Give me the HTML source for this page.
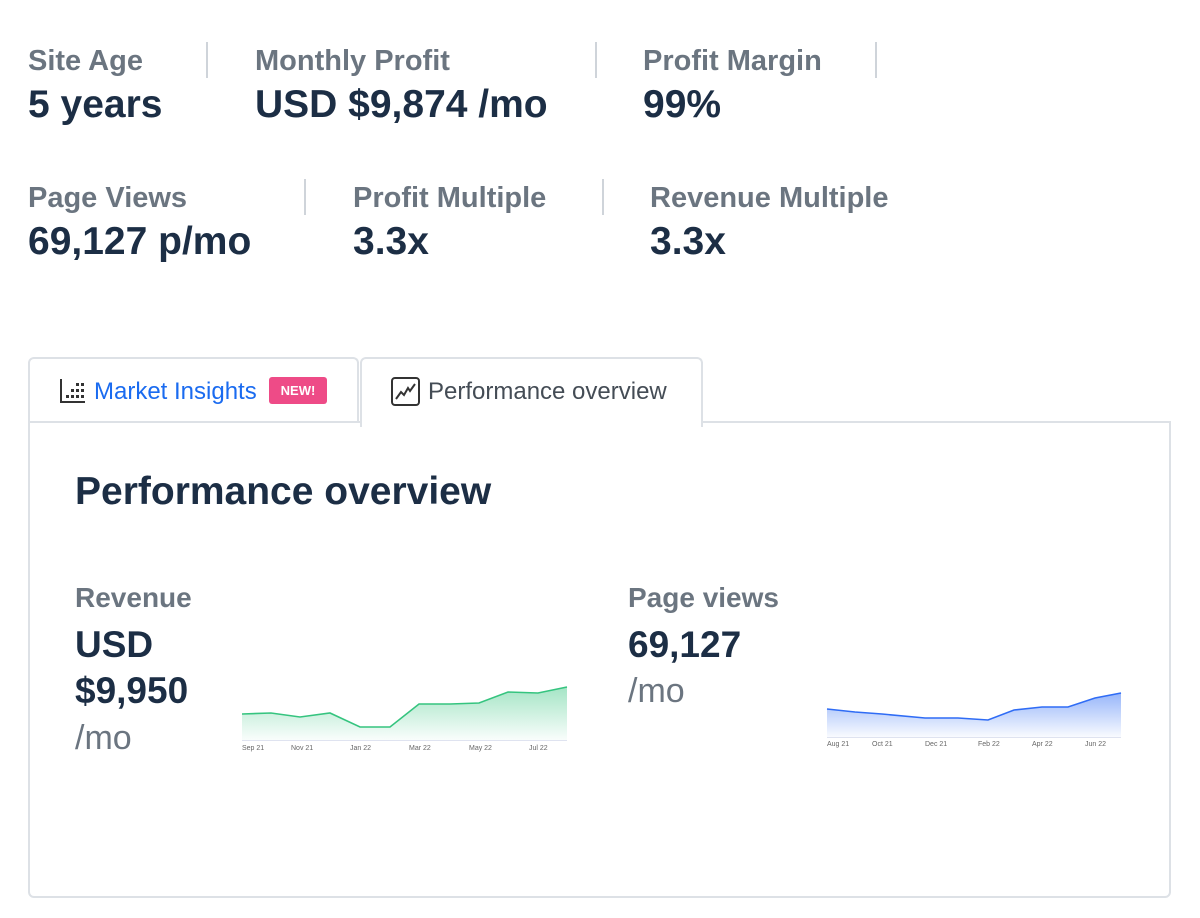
<!DOCTYPE html>
<html><head><meta charset="utf-8"><style>
body{margin:0;width:1200px;height:918px;background:#fff;font-family:"Liberation Sans",Arial,sans-serif;position:relative;overflow:hidden}
.a{position:absolute;white-space:nowrap;line-height:1}
.l{font-size:29px;color:#6b7580;font-weight:bold}
.v{font-size:39px;color:#1c2e45;font-weight:bold}
.p{font-size:28px;color:#6b7580;font-weight:bold}
.pv{font-size:37px;color:#1c2e45;font-weight:bold}
.d{position:absolute;width:2px;background:#cfd4da}
</style></head><body>
<div class="a l" style="left:28px;top:47px">Site Age</div>
<div class="a v" style="left:28px;top:85px">5 years</div>
<div class="d" style="left:206px;top:42px;height:36px"></div>
<div class="a l" style="left:255px;top:47px">Monthly Profit</div>
<div class="a v" style="left:255px;top:85px">USD $9,874 /mo</div>
<div class="d" style="left:595px;top:42px;height:36px"></div>
<div class="a l" style="left:643px;top:47px">Profit Margin</div>
<div class="a v" style="left:643px;top:85px">99%</div>
<div class="d" style="left:875px;top:42px;height:36px"></div>

<div class="a l" style="left:28px;top:184px">Page Views</div>
<div class="a v" style="left:28px;top:222px">69,127 p/mo</div>
<div class="d" style="left:304px;top:179px;height:36px"></div>
<div class="a l" style="left:353px;top:184px">Profit Multiple</div>
<div class="a v" style="left:353px;top:222px">3.3x</div>
<div class="d" style="left:602px;top:179px;height:36px"></div>
<div class="a l" style="left:650px;top:184px">Revenue Multiple</div>
<div class="a v" style="left:650px;top:222px">3.3x</div>

<div style="position:absolute;left:28px;top:421px;width:1139px;height:473px;border:2px solid #dde1e6;border-radius:0 0 6px 6px"></div>
<div style="position:absolute;left:28px;top:357px;width:327px;height:62px;border:2px solid #dde1e6;border-bottom:none;border-radius:6px 6px 0 0;background:#fff"></div>
<div style="position:absolute;left:360px;top:357px;width:339px;height:68px;border:2px solid #dde1e6;border-bottom:none;border-radius:6px 6px 0 0;background:#fff"></div>

<svg class="a" style="left:59px;top:378px" width="27" height="26" viewBox="0 0 27 26">
<path d="M2 1V24H26" stroke="#333" stroke-width="2" fill="none"/>
<g fill="#333"><rect x="7" y="17" width="3" height="3"/><rect x="12" y="17" width="3" height="3"/><rect x="17" y="17" width="3" height="3"/><rect x="22" y="17" width="3" height="3"/>
<rect x="12" y="11" width="3" height="3"/><rect x="17" y="11" width="3" height="3"/><rect x="22" y="11" width="3" height="3"/>
<rect x="17" y="5" width="3" height="3"/><rect x="22" y="5" width="3" height="3"/></g></svg>
<div class="a" style="left:94px;top:380px;font-size:24px;color:#1a6bf0">Market Insights</div>
<div class="a" style="left:269px;top:377px;width:58px;height:27px;background:#ee4b87;border-radius:3px;color:#fff;font-weight:bold;font-size:13px;line-height:27px;text-align:center">NEW!</div>

<svg class="a" style="left:391px;top:377px" width="29" height="29" viewBox="0 0 29 29">
<rect x="1" y="1" width="27" height="27" rx="3" stroke="#333" stroke-width="2" fill="none"/>
<path d="M5 22L10 15L13 18L17 11L19 14L24 7" stroke="#333" stroke-width="2" fill="none"/></svg>
<div class="a" style="left:428px;top:380px;font-size:24px;color:#444c55">Performance overview</div>

<div class="a" style="left:75px;top:472px;font-size:39px;font-weight:bold;color:#1c2e45">Performance overview</div>

<div class="a p" style="left:75px;top:584px">Revenue</div>
<div class="a pv" style="left:75px;top:626px">USD</div>
<div class="a pv" style="left:75px;top:672px">$9,950</div>
<div class="a" style="left:75px;top:721px;font-size:34px;color:#6b7580">/mo</div>

<div class="a p" style="left:628px;top:584px">Page views</div>
<div class="a pv" style="left:628px;top:626px">69,127</div>
<div class="a" style="left:628px;top:674px;font-size:34px;color:#6b7580">/mo</div>

<svg class="a" style="left:0;top:0" width="1200" height="918">
<defs>
<linearGradient id="g" x1="0" y1="0" x2="0" y2="1"><stop offset="0" stop-color="#35c47f" stop-opacity=".45"/><stop offset="1" stop-color="#35c47f" stop-opacity=".03"/></linearGradient>
<linearGradient id="b" x1="0" y1="0" x2="0" y2="1"><stop offset="0" stop-color="#2f6cf5" stop-opacity=".5"/><stop offset="1" stop-color="#2f6cf5" stop-opacity=".03"/></linearGradient>
</defs>
<path d="M242 714L271 713L300 717L330 713L360 727L390 727L419 704L450 704L479 703L508 692L538 693L567 687V740H242Z" fill="url(#g)"/>
<path d="M242 714L271 713L300 717L330 713L360 727L390 727L419 704L450 704L479 703L508 692L538 693L567 687" fill="none" stroke="#35c47f" stroke-width="1.6"/>
<line x1="242" y1="740.5" x2="567" y2="740.5" stroke="#dfe3f0"/>
<g font-size="7" fill="#666" font-family="Liberation Sans,sans-serif">
<text x="242" y="750">Sep 21</text><text x="291" y="750">Nov 21</text><text x="350" y="750">Jan 22</text><text x="409" y="750">Mar 22</text><text x="469" y="750">May 22</text><text x="529" y="750">Jul 22</text></g>
<path d="M827 709L855 712L882 714L925 718L958 718L988 720L1014 710L1042 707L1068 707L1095 698L1121 693V737H827Z" fill="url(#b)"/>
<path d="M827 709L855 712L882 714L925 718L958 718L988 720L1014 710L1042 707L1068 707L1095 698L1121 693" fill="none" stroke="#2f6cf5" stroke-width="1.6"/>
<line x1="827" y1="737.5" x2="1121" y2="737.5" stroke="#dfe3f0"/>
<g font-size="7" fill="#666" font-family="Liberation Sans,sans-serif">
<text x="827" y="746">Aug 21</text><text x="872" y="746">Oct 21</text><text x="925" y="746">Dec 21</text><text x="978" y="746">Feb 22</text><text x="1032" y="746">Apr 22</text><text x="1085" y="746">Jun 22</text></g>
</svg>
</body></html>
